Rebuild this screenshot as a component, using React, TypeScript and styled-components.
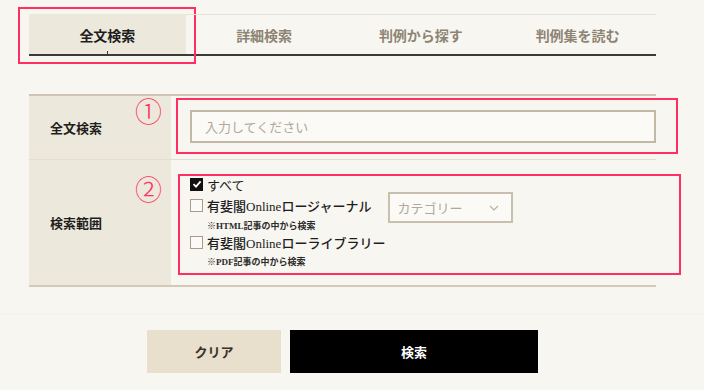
import * as React from "react";
import styled, { createGlobalStyle } from "styled-components";

const GlobalStyle = createGlobalStyle`
  html, body {
    margin: 0;
    padding: 0;
    background: #f8f6f1;
  }
  body {
    font-family: "Liberation Serif", "Noto Sans CJK JP", serif;
    color: #222;
  }
`;

const MARK = "#ff2f62";

const Page = styled.div`
  width: 704px;
  height: 390px;
  overflow: hidden;
  background: #f8f6f1;
`;

const Container = styled.div`
  width: 627px;
  margin-left: 29px;
`;

const Tabs = styled.div`
  margin-top: 14px;
  display: grid;
  grid-template-columns: repeat(4, 1fr);
  border-bottom: 2px solid #3a3a3a;
`;

const Tab = styled.div<{ active?: boolean }>`
  position: relative;
  height: 40px;
  display: flex;
  align-items: center;
  justify-content: center;
  font-size: 14px;
  font-weight: bold;
  color: ${p => (p.active ? "#1e1e1e" : "#8d8474")};
  background: ${p => (p.active ? "#ece8db" : "transparent")};
  border-top: 1px solid ${p => (p.active ? "#ece8db" : "#e8e1d4")};
  box-sizing: border-box;
`;

const TabMark = styled.div`
  position: absolute;
  left: -11px;
  top: -8px;
  width: 178px;
  height: 57px;
  border: 2px solid ${MARK};
  box-sizing: border-box;
  pointer-events: none;
`;

const Tick = styled.span`
  position: absolute;
  left: 50%;
  bottom: 0;
  width: 1px;
  height: 3px;
  background: #3a3a3a;
`;

const Table = styled.div`
  margin-top: 38px;
  border-top: 2px solid #cdc4b3;
  border-bottom: 2px solid #d3c9b6;
`;

const Row = styled.div<{ h: number; last?: boolean }>`
  display: grid;
  grid-template-columns: 142px 1fr;
  height: ${p => p.h}px;
  border-bottom: ${p => (p.last ? "none" : "1px solid #e4ddcf")};
`;

const Label = styled.div`
  position: relative;
  background: #ece8db;
  display: flex;
  align-items: center;
  padding-left: 21px;
  font-size: 13px;
  font-weight: bold;
  color: #1e1e1e;
`;

const Circled = styled.span<{ top: number }>`
  position: absolute;
  right: 9px;
  top: ${p => p.top}px;
  font-family: "Noto Sans CJK JP", sans-serif;
  font-weight: 300;
  font-size: 27px;
  line-height: 1;
  color: ${MARK};
`;

const Cell = styled.div<{ pt: number }>`
  position: relative;
  padding: ${p => p.pt}px 0 0 19px;
`;

const CellMark = styled.div<{ top: number; left: number; w: number; h: number }>`
  position: absolute;
  top: ${p => p.top}px;
  left: ${p => p.left}px;
  width: ${p => p.w}px;
  height: ${p => p.h}px;
  border: 2px solid ${MARK};
  box-sizing: border-box;
  pointer-events: none;
`;

const Input = styled.input`
  display: block;
  width: 100%;
  height: 33px;
  box-sizing: border-box;
  border: 2px solid #c2b8a6;
  background: #fbfaf7;
  padding: 0 13px;
  font-family: "Noto Sans CJK JP", sans-serif;
  font-size: 13px;
  outline: none;
  &::placeholder {
    color: #b0a898;
  }
`;

const Options = styled.div`
  display: flex;
  flex-direction: column;
`;

const OptionLine = styled.div<{ h: number }>`
  display: flex;
  align-items: center;
  height: ${p => p.h}px;
`;

const Box = styled.span<{ checked?: boolean }>`
  width: 13px;
  height: 13px;
  box-sizing: border-box;
  margin-right: 4px;
  display: inline-flex;
  align-items: center;
  justify-content: center;
  background: ${p => (p.checked ? "#111" : "#fbfaf7")};
  border: 1px solid ${p => (p.checked ? "#111" : "#a59c8d")};
`;

const OptionText = styled.span<{ bold?: boolean }>`
  font-size: 13px;
  font-weight: ${p => (p.bold ? 500 : "normal")};
  color: #1e1e1e;
  white-space: nowrap;
`;

const Note = styled.div<{ h: number }>`
  height: ${p => p.h}px;
  display: flex;
  align-items: center;
  padding-left: 17px;
  font-size: 9px;
  font-weight: bold;
  color: #2a2a2a;
`;

const Select = styled.div`
  width: 125px;
  height: 31px;
  box-sizing: border-box;
  margin-left: 17px;
  margin-top: -3px;
  border: 2px solid #c8bfae;
  background: #fbfaf7;
  display: flex;
  align-items: center;
  justify-content: space-between;
  padding: 0 12px 0 7px;
  font-family: "Noto Sans CJK JP", sans-serif;
  font-size: 13px;
  color: #b0a898;
`;

const JournalRow = styled.div`
  display: flex;
  align-items: flex-start;
  height: 39px;
`;

const Faint = styled.div`
  margin-top: 27px;
  height: 1px;
  background: #eaf5ef;
`;

const Buttons = styled.div`
  margin-top: 15px;
  display: flex;
  justify-content: center;
  gap: 9px;
  padding-left: 29px;
  width: 627px;
`;

const Button = styled.button<{ primary?: boolean }>`
  height: 43px;
  width: ${p => (p.primary ? 248 : 134)}px;
  border: none;
  background: ${p => (p.primary ? "#000" : "#e8dfcc")};
  color: ${p => (p.primary ? "#fff" : "#3a3128")};
  font-family: "Liberation Serif", "Noto Sans CJK JP", serif;
  font-size: 13px;
  font-weight: bold;
`;

const Check = () => (
  <svg width="10" height="10" viewBox="0 0 10 10">
    <path d="M1.5 5.2 L4 7.6 L8.6 2.4" fill="none" stroke="#fff" strokeWidth="1.8" />
  </svg>
);

const Chevron = () => (
  <svg width="10" height="6" viewBox="0 0 10 6">
    <path d="M1 1 L5 5 L9 1" fill="none" stroke="#b8ae9e" strokeWidth="1.1" />
  </svg>
);

const tabs = ["全文検索", "詳細検索", "判例から探す", "判例集を読む"];

export default function App() {
  return (
    <Page>
      <GlobalStyle />
      <Container>
        <Tabs>
          {tabs.map((t, i) => (
            <Tab key={t} active={i === 0}>
              {t}
              {i === 0 && <Tick />}
              {i === 0 && <TabMark />}
            </Tab>
          ))}
        </Tabs>

        <Table>
          <Row h={63}>
            <Label>
              全文検索
              <Circled top={1}>①</Circled>
            </Label>
            <Cell pt={14}>
              <Input placeholder="入力してください" />
              <CellMark top={2} left={5} w={502} h={56} />
            </Cell>
          </Row>
          <Row h={125} last>
            <Label>
              検索範囲
              <Circled top={15}>②</Circled>
            </Label>
            <Cell pt={13}>
              <Options>
                <OptionLine h={22}>
                  <Box checked>
                    <Check />
                  </Box>
                  <OptionText>すべて</OptionText>
                </OptionLine>
                <JournalRow>
                  <div>
                    <OptionLine h={21}>
                      <Box />
                      <OptionText bold>有斐閣Onlineロージャーナル</OptionText>
                    </OptionLine>
                    <Note h={18}>※HTML記事の中から検索</Note>
                  </div>
                  <Select>
                    カテゴリー
                    <Chevron />
                  </Select>
                </JournalRow>
                <OptionLine h={17}>
                  <Box />
                  <OptionText bold>有斐閣Onlineローライブラリー</OptionText>
                </OptionLine>
                <Note h={20}>※PDF記事の中から検索</Note>
              </Options>
              <CellMark top={14} left={7} w={503} h={101} />
            </Cell>
          </Row>
        </Table>
      </Container>
      <Faint />
      <Buttons>
        <Button>クリア</Button>
        <Button primary>検索</Button>
      </Buttons>
    </Page>
  );
}
